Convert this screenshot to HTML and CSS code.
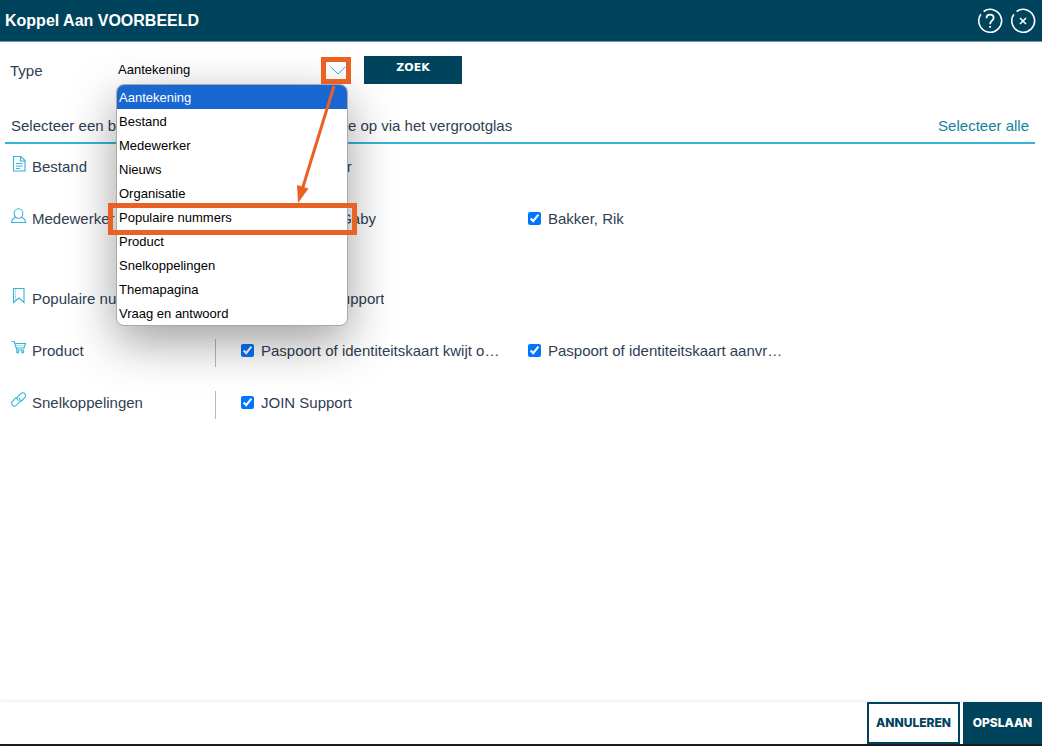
FILE: index.html
```html
<!DOCTYPE html>
<html lang="nl">
<head>
<meta charset="utf-8">
<meta name="viewport" content="width=device-width, initial-scale=1">
<title>Koppel Aan VOORBEELD</title>
<link rel="stylesheet" href="styles.css">
</head>
<body>
<div class="dialog">
  <header class="titlebar">
    <h1>Koppel Aan VOORBEELD</h1>
    <div class="titlebar-actions">
      <button class="round" type="button" aria-label="Help">
        <svg viewBox="0 0 26 26"><path d="M6.600 3.500A11.400 11.400 0 1 1 3.900 6.200"/><path d="M9.500 10.200c0-2.200 1.400-3.500 3.500-3.500s3.600 1.300 3.600 3.200c0 2.700-3.500 2.900-3.500 6.300M13.100 18v1.800" stroke-width="1.800"/></svg>
      </button>
      <button class="round" type="button" aria-label="Sluiten">
        <svg viewBox="0 0 26 26"><path d="M6.600 3.500A11.400 11.400 0 1 1 3.900 6.200"/><path d="M10 10l6 6M16 10l-6 6" stroke-width="1.600"/></svg>
      </button>
    </div>
  </header>

  <main class="content">
    <div class="filter">
      <label class="filter-label" for="type">Type</label>
      <div class="picker">
        <select id="type" class="picker-select">
          <option>Aantekening</option>
        </select>
        <svg class="picker-caret" viewBox="0 0 16 9"><path d="M.5.7L8 8l7.500-7.300"/></svg>
        <ul class="menu" role="listbox" aria-label="Type">
          <li class="menu-item selected" role="option" aria-selected="true">Aantekening</li>
          <li class="menu-item" role="option">Bestand</li>
          <li class="menu-item" role="option">Medewerker</li>
          <li class="menu-item" role="option">Nieuws</li>
          <li class="menu-item" role="option">Organisatie</li>
          <li class="menu-item" role="option">Populaire nummers</li>
          <li class="menu-item" role="option">Product</li>
          <li class="menu-item" role="option">Snelkoppelingen</li>
          <li class="menu-item" role="option">Themapagina</li>
          <li class="menu-item" role="option">Vraag en antwoord</li>
        </ul>
        <svg class="callout" viewBox="0 0 250 180" aria-hidden="true">
          <rect x="215.500" y="3.500" width="25" height="22"/>
          <rect x="2.500" y="149.500" width="244" height="27"/>
          <path d="M226 30L194 134"/>
          <path class="callout-head" d="M189 129l11.500 3.500L190 147z"/>
        </svg>
      </div>
      <button class="search" type="button">ZOEK</button>
    </div>

    <div class="section-head">
      <p>Selecteer een bestaande relatie of zoek een nieuwe op via het vergrootglas</p>
      <a href="#alle">Selecteer alle</a>
    </div>

    <section class="group">
      <h2 class="group-name"><svg class="icon" viewBox="0 0 16 18"><path d="M2.500 1.500h7.500l4 4v10.500H2.500zM9.500 1.500v4.500h4.500M5 8.500h6.500M5 11h6.500M5 13.500h4"/></svg>Bestand</h2>
      <div class="items">
        <label class="item"><input type="checkbox" checked><span>Meldformulier</span></label>
      </div>
    </section>
    <section class="group">
      <h2 class="group-name"><svg class="icon" viewBox="0 0 16 18"><ellipse cx="7.500" cy="6.500" rx="4.300" ry="4.700"/><path d="M4.800 10.200C2 11 .8 12.500.6 15.500h13.900c-.2-3-1.400-4.500-4.200-5.300"/></svg>Medewerker</h2>
      <div class="items">
        <label class="item"><input type="checkbox" checked><span>Beekmans, Gaby</span></label>
        <label class="item"><input type="checkbox" checked><span>Bakker, Rik</span></label>
        <label class="item"><input type="checkbox" checked><span>Vos</span></label>
      </div>
    </section>
    <section class="group">
      <h2 class="group-name"><svg class="icon" viewBox="0 0 16 18"><path d="M2.500 1.500h10.500v14l-5-4.500-5.500 4.500z"/><path d="M4.500 1.500v12" opacity=".4"/></svg>Populaire nummers</h2>
      <div class="items">
        <label class="item"><input type="checkbox" checked><span>Technisch Support</span></label>
      </div>
    </section>
    <section class="group">
      <h2 class="group-name"><svg class="icon" viewBox="0 0 16 18"><path d="M.5 2.500h2.700l2.600 8.500h7.400M3.800 4.500h10.700L13 9H5.200"/><path d="M4.500 6.700h9" opacity=".4"/><circle cx="6.700" cy="12.800" r="1.100"/><circle cx="11.700" cy="12.800" r="1.100"/></svg>Product</h2>
      <div class="items">
        <label class="item"><input type="checkbox" checked><span>Paspoort of identiteitskaart kwijt of gestolen</span></label>
        <label class="item"><input type="checkbox" checked><span>Paspoort of identiteitskaart aanvragen</span></label>
      </div>
    </section>
    <section class="group">
      <h2 class="group-name"><svg class="icon" viewBox="0 0 16 18"><path d="M7.200 9.500C5.800 8.500 5.700 6.900 6.900 5.700l2.700-2.900c1.200-1.200 2.900-1.300 4.100-.2s1.200 2.800 0 4.100L11 9.500c-.6.600-1.300.9-2 .8M8 7.300c1.400 1 1.500 2.600.3 3.900L5.700 14c-1.200 1.300-2.900 1.400-4.100.3s-1.300-2.800-.1-4L4.200 7.400c.6-.6 1.300-.8 2-.7"/></svg>Snelkoppelingen</h2>
      <div class="items">
        <label class="item"><input type="checkbox" checked><span>JOIN Support</span></label>
      </div>
    </section>
  </main>

  <footer class="footer">
    <button class="cancel" type="button">ANNULEREN</button>
    <button class="save" type="button">OPSLAAN</button>
  </footer>
</div>
</body>
</html>
```
FILE: styles.css
```css
:root {
  --navy: #00435c;
  --cyan: #34b4d8;
  --text: #2f3e52;
  --orange: #e96123;
}

* { box-sizing: border-box; }

body {
  margin: 0;
  font: 15px/24px "Liberation Sans", Arial, sans-serif;
  color: var(--text);
  background: #fff;
}

button { font: 800 12px/16px Inter, sans-serif; border: 0; }

.dialog {
  display: flex;
  flex-direction: column;
  min-height: 100vh;
  border-bottom: 2px solid #1d1d1f;
}

.titlebar {
  display: flex;
  align-items: center;
  justify-content: space-between;
  height: 42px;
  padding: 0 6px 0 5px;
  background: var(--navy);
  border-bottom: 1px solid #6f97a6;
}

.titlebar h1 { margin: 0; font-size: 16px; color: #fff; }
.titlebar-actions { display: flex; gap: 7px; }

.round { width: 26px; height: 26px; padding: 0; background: none; }
.round svg { display: block; fill: none; stroke: #fff; stroke-width: 1.6; }

.content { flex: 1; padding: 14px 7px 0 5px; }

.filter { display: flex; height: 28px; }
.filter-label { width: 111px; padding: 3px 5px; }

.picker { position: relative; width: 232px; margin-right: 16px; }

.picker-select {
  display: block;
  width: 100%;
  height: 28px;
  padding: 0 2px 2px;
  font: 13px "Liberation Sans", Arial, sans-serif;
  color: #000;
  background: none;
  border: 0;
  appearance: none;
}

.picker-caret {
  position: absolute;
  top: 10px;
  right: 2px;
  width: 16px;
  fill: none;
  stroke: var(--cyan);
}

.menu {
  position: absolute;
  z-index: 1;
  top: 28px;
  left: 0;
  width: 232px;
  margin: 0;
  padding: 0;
  overflow: hidden;
  list-style: none;
  font-size: 13px;
  color: #000;
  background: #fff;
  border: 1px solid #a9a9a9;
  border-radius: 8px;
  box-shadow: 0 16px 48px rgba(0, 0, 0, .38);
}

.menu-item { height: 24px; padding: 1px 2px 0; }
.menu-item.selected { color: #fff; background: #1967d2; }

.callout {
  position: absolute;
  z-index: 2;
  top: 0;
  left: -8px;
  width: 250px;
  height: 180px;
  fill: none;
  stroke: var(--orange);
  stroke-width: 5;
  pointer-events: none;
}

.callout path { stroke-width: 3; }
.callout .callout-head { fill: var(--orange); stroke: none; }

.search {
  width: 98px;
  padding: 0 0 4px;
  font: 700 11px/16px "DejaVu Sans", sans-serif;
  color: #fff;
  background: var(--navy);
}

.section-head {
  display: flex;
  justify-content: space-between;
  margin-top: 30px;
  padding: 0 6px 4px;
  border-bottom: 2px solid var(--cyan);
}

.section-head p { margin: 0; }
.section-head a { color: #16829d; text-decoration: none; }

.group { display: flex; margin-top: 24px; }
.section-head + .group { margin-top: 11px; }

.group-name {
  display: flex;
  gap: 5px;
  flex: none;
  width: 210px;
  margin: 0;
  padding-left: 6px;
  font-size: 15px;
  font-weight: 400;
}

.icon { width: 16px; height: 18px; fill: none; stroke: var(--cyan); stroke-width: 1.1; }

.items {
  display: flex;
  flex-wrap: wrap;
  flex: 1;
  max-width: 624px;
  padding-left: 25px;
  border-left: 1px solid #b9b9b9;
}

.item { display: flex; gap: 7px; width: 287px; height: 28px; }
.item input { flex: none; width: 13px; height: 13px; margin: 5px 0 0; accent-color: #0075ff; }
.item span { max-width: 240px; height: 24px; overflow: hidden; white-space: nowrap; text-overflow: ellipsis; }

.footer {
  display: flex;
  justify-content: flex-end;
  gap: 3px;
  height: 42px;
  box-shadow: 0 -1px 3px rgba(0, 0, 0, .08);
}

.footer .cancel { width: 93px; padding: 0; color: var(--navy); background: #fff; border: 2px solid var(--navy); }
.footer .save { width: 79px; padding: 0; color: #fff; background: var(--navy); }
```
